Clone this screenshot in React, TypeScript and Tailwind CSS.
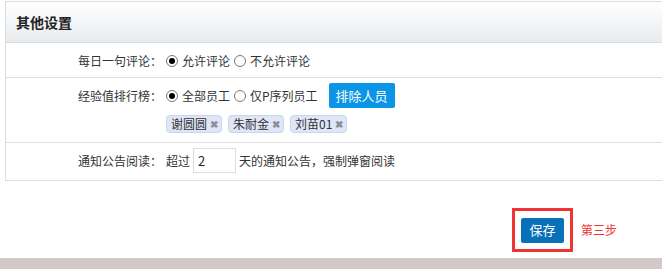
import React from "react";

const font = { fontFamily: "'Noto Sans CJK SC', 'Liberation Sans', sans-serif" };

/* ── radio dot ─────────────────────────────────────────────────────── */
const Radio = ({ checked }: { checked?: boolean }) => (
  <span className="inline-flex items-center justify-center w-[12px] h-[12px] rounded-full border border-[#777] bg-white shrink-0">
    {checked && <span className="w-[6px] h-[6px] rounded-full bg-black" />}
  </span>
);

/* ── person tag ────────────────────────────────────────────────────── */
const Tag = ({ name }: { name: string }) => (
  <span className="inline-flex items-center h-[18px] pl-[4px] pr-[3px] gap-[1px] rounded-[4px] border border-[#c9d6ee] bg-[#dfe7f7] text-[12px] text-[#333] leading-none">
    {name}
    <span className="text-[10px] font-bold text-[#8a8f99] ml-[2px]">✖</span>
  </span>
);

const Row = ({
  label,
  children,
  h,
  last,
}: {
  label: string;
  children: React.ReactNode;
  h: string;
  last?: boolean;
}) => (
  <div className={`flex ${h} ${last ? "" : "border-b border-[#dddddd]"}`}>
    <div className="w-[156px] shrink-0 text-right text-[12px] text-[#333] pt-[10px] leading-[16px]">
      {label}
    </div>
    <div className="pl-[4px] flex-1">{children}</div>
  </div>
);

export default function App() {
  return (
    <div className="w-[662px] h-[269px] bg-white overflow-hidden relative flex flex-col" style={font}>
      {/* ── Settings panel ── */}
      <div className="ml-[5px] mt-[1px] w-[700px] border-t border-l border-b border-[#dddddd]">
        <div className="h-[41px] border-b border-[#dddddd] bg-gradient-to-b from-white to-[#e8ecef] flex items-center pl-[10px]">
          <span className="text-[14px] font-bold text-[#222]">其他设置</span>
        </div>

        <Row label="每日一句评论：" h="h-[35px]">
          <div className="flex items-center gap-[4px] text-[12px] text-[#333] pt-[10px] leading-[16px]">
            <Radio checked />
            <span>允许评论</span>
            <Radio />
            <span>不允许评论</span>
          </div>
        </Row>

        <Row label="经验值排行榜：" h="h-[65px]">
          <div className="flex items-center gap-[4px] text-[12px] text-[#333] pt-[5px] leading-[16px]">
            <Radio checked />
            <span>全部员工</span>
            <Radio />
            <span>仅P序列员工</span>
            <button className="ml-[7px] h-[25px] w-[66px] rounded-[2px] bg-[#0b95e6] text-white text-[13px]">
              排除人员
            </button>
          </div>
          <div className="flex gap-[6px] mt-[7px]">
            <Tag name="谢圆圆" />
            <Tag name="朱耐金" />
            <Tag name="刘苗01" />
          </div>
        </Row>

        <Row label="通知公告阅读：" h="h-[37px]" last>
          <div className="flex items-center gap-[3px] text-[12px] text-[#333] pt-[5px] leading-[16px]">
            <span>超过</span>
            <span className="w-[43px] h-[25px] border border-[#dddddd] flex items-center pl-[4px] text-[13px] text-[#222]">
              2
            </span>
            <span>天的通知公告，强制弹窗阅读</span>
          </div>
        </Row>
      </div>

      {/* ── Save ── */}
      <div className="flex items-center mt-[27px] ml-[512px]">
        <div className="border-[3px] border-[#f03333] w-[61px] h-[44px] flex items-center justify-center">
          <button className="w-[43px] h-[25px] rounded-[2px] bg-[#0a71b8] text-white text-[13px]">
            保存
          </button>
        </div>
        <span className="ml-[8px] text-[12px] text-[#f03333]">第三步</span>
      </div>

      <div className="mt-auto h-[11px] bg-[#d3c9c9]" />
    </div>
  );
}
